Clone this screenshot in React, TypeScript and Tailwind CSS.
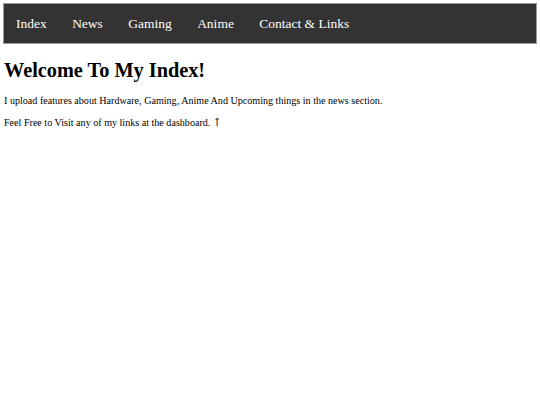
import React from "react";

export default function App() {
  const items = ["Index", "News", "Gaming", "Anime", "Contact & Links"];
  return (
    <div className="min-h-[405px] bg-white text-black" style={{ fontFamily: '"Liberation Serif", "Times New Roman", serif' }}>
      <div className="p-[3px]">
        <nav className="flex h-[41px] items-center border border-[#9a9a9a] bg-[#333333] pt-[2px]">
          {items.map((t) => (
            <a key={t} className="px-[12.7px] text-[13.5px] text-white first:pl-[12px]">
              {t}
            </a>
          ))}
        </nav>
      </div>
      <div className="px-[4px]">
        <h1 className="mt-[10px] text-[20.3px] font-bold leading-[26px]">Welcome To My Index!</h1>
        <p className="mt-[11px] text-[10.1px] leading-[13px]">
          I upload features about Hardware, Gaming, Anime And Upcoming things in the news section.
        </p>
        <p className="mt-[9px] text-[10.1px] leading-[13px]">
          Feel Free to Visit any of my links at the dashboard.
          <span className="ml-[2px] text-[11px] text-black" style={{ fontFamily: '"DejaVu Serif", serif' }}>↑</span>
        </p>
      </div>
    </div>
  );
}
